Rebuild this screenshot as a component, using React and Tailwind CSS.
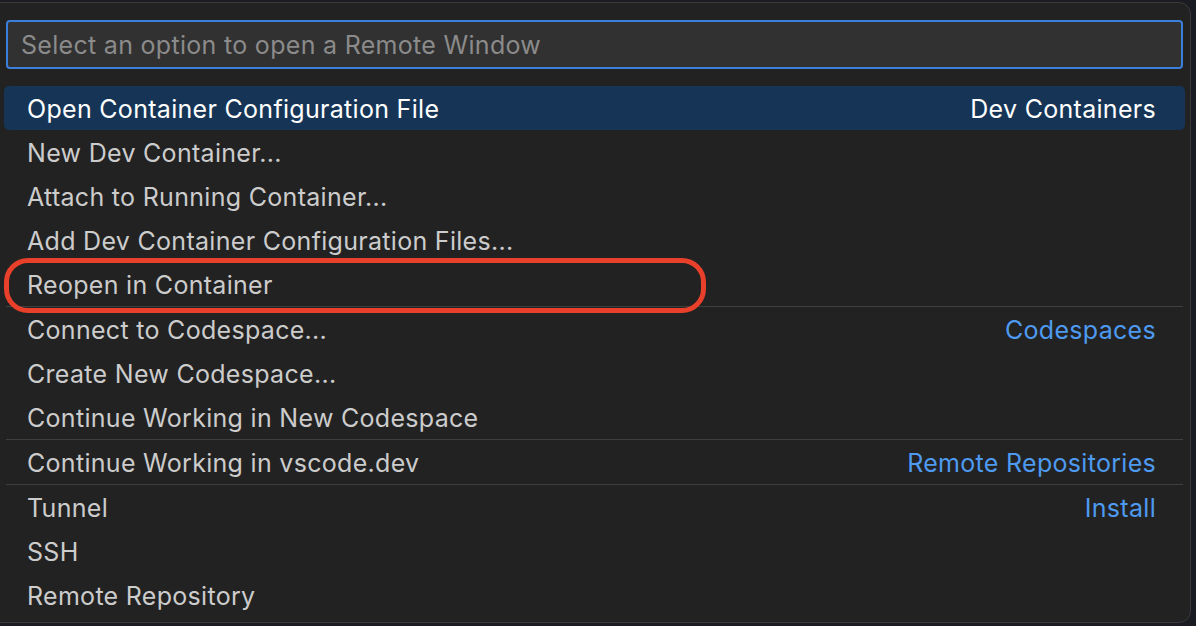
const ROWS = [
  { label: 'Open Container Configuration File', detail: 'Dev Containers', active: true },
  { label: 'New Dev Container...' },
  { label: 'Attach to Running Container...' },
  { label: 'Add Dev Container Configuration Files...' },
  { label: 'Reopen in Container', marked: true },
  { label: 'Connect to Codespace...', detail: 'Codespaces', sep: true },
  { label: 'Create New Codespace...' },
  { label: 'Continue Working in New Codespace' },
  { label: 'Continue Working in vscode.dev', detail: 'Remote Repositories', sep: true },
  { label: 'Tunnel', detail: 'Install', sep: true },
  { label: 'SSH' },
  { label: 'Remote Repository' },
]

function Row({ row }) {
  return (
    <div className="flex flex-col">
      {row.sep && <div className="mx-[2px] h-px bg-[#3f3f3f]" />}
      <div
        className={`relative flex h-[44px] items-center justify-between rounded-[5px] pl-[23px] pr-[29px] pt-[4px] ${
          row.active ? 'bg-[#163556] text-white' : 'text-[#cccccc]'
        }`}
      >
        <span>{row.label}</span>
        {row.detail && (
          <span className={row.active ? 'text-white' : 'text-[#4e9af0]'}>{row.detail}</span>
        )}
        {/* red annotation ring */}
        {row.marked && (
          <div className="pointer-events-none absolute left-[0px] top-[-4px] z-10 h-[55px] w-[702px] rounded-[24px] border-[5px] border-[#e8402a]" />
        )}
      </div>
    </div>
  )
}

export default function App() {
  return (
    <div className="h-[626px] w-[1196px] overflow-hidden bg-[#1a1c22] font-['Inter',sans-serif] text-[25px] tracking-[0.3px]">
      <div className="ml-[-10px] mt-[2px] h-[621px] w-[1201px] rounded-[12px] border border-[#3a3a3a] bg-[#222222] pl-[15px] pr-[7px] pt-[17px]">
        <div className="flex h-[49px] items-center rounded-[4px] border-2 border-[#3b7fda] bg-[#313131] px-[13px] pt-[3px] text-[#8b8b8b]">
          Select an option to open a Remote Window
        </div>
        <div className="mx-[-2px] mt-[17px] flex flex-col">
          {ROWS.map(r => (
            <Row key={r.label} row={r} />
          ))}
        </div>
      </div>
    </div>
  )
}
